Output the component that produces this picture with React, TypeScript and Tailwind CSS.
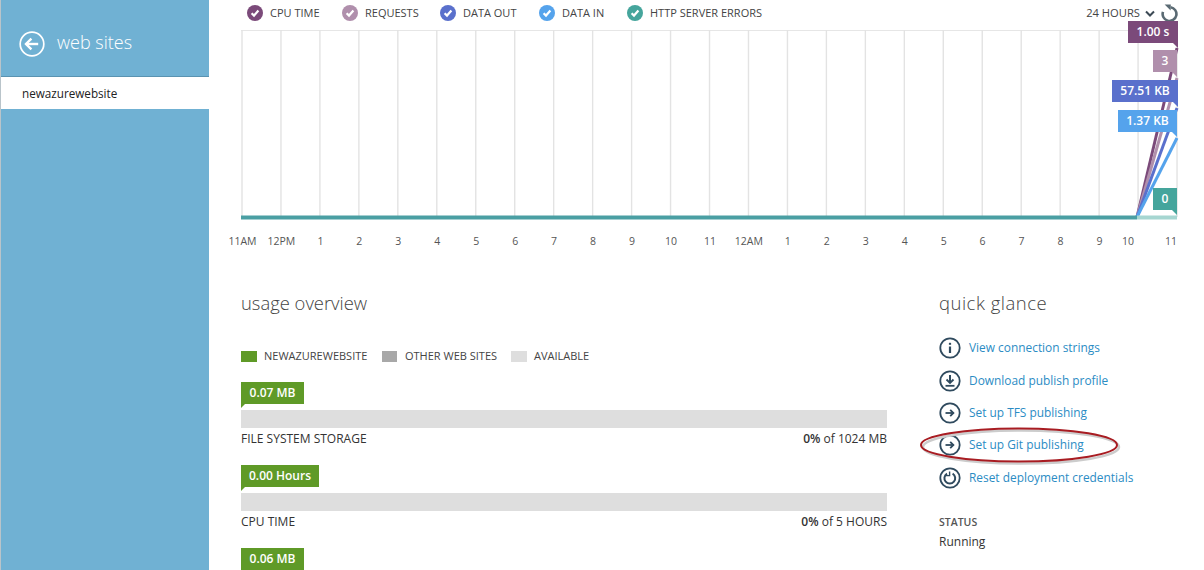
import React from 'react';

const font = { fontFamily: '"Open Sans", "Liberation Sans", sans-serif' };

const legend = [
  { label: 'CPU TIME', color: 'text-[#7b4a7a]', w: 'w-[95px]' },
  { label: 'REQUESTS', color: 'text-[#b08fac]', w: 'w-[98px]' },
  { label: 'DATA OUT', color: 'text-[#5a70cc]', w: 'w-[99px]' },
  { label: 'DATA IN', color: 'text-[#55a3ec]', w: 'w-[88px]' },
  { label: 'HTTP SERVER ERRORS', color: 'text-[#45a59c]', w: 'w-[150px]' },
];

const hours = ['11AM', '12PM', '1', '2', '3', '4', '5', '6', '7', '8', '9', '10', '11', '12AM', '1', '2', '3', '4', '5', '6', '7', '8', '9'];

const gridX = Array.from({ length: 25 }, (_, i) => 1 + i * 38.96);

const CheckDot = ({ className }: { className: string }) => (
  <svg viewBox="0 0 16 16" className={`w-4 h-4 shrink-0 ${className}`}>
    <circle cx="8" cy="8" r="8" fill="currentColor" />
    <path d="M4.6 8.2 7 10.6 11.4 5.6" fill="none" stroke="white" strokeWidth="2.2" />
  </svg>
);

const Tip = ({ text, className, tail }: { text: string; className: string; tail: string }) => (
  <div className={`absolute h-[22px] flex items-center justify-center text-[12px] font-semibold text-white ${className}`}>
    {text}
    <div className={`absolute right-0 top-full w-0 h-0 border-t-[5px] border-l-[5px] border-l-transparent ${tail}`} />
  </div>
);

const LinkIcon = ({ kind }: { kind: string }) => (
  <svg viewBox="0 0 22 22" className="w-[22px] h-[22px] shrink-0 text-[#2f4a5e]" fill="none" stroke="currentColor">
    <circle cx="11" cy="11" r="9.7" strokeWidth="1.8" />
    {kind === 'info' && (
      <>
        <path d="M11 9.5v6.5" strokeWidth="2.2" />
        <path d="M11 5.8v2" strokeWidth="2.2" />
      </>
    )}
    {kind === 'download' && (
      <>
        <path d="M11 5v7" strokeWidth="2" />
        <path d="M7.5 9.5 11 13l3.5-3.5" strokeWidth="1.8" />
        <path d="M6.5 15.8h9" strokeWidth="1.8" />
      </>
    )}
    {kind === 'arrow' && (
      <>
        <path d="M6.5 11h8" strokeWidth="1.8" />
        <path d="M11.2 7.8l3.2 3.2-3.2 3.2" strokeWidth="1.8" />
      </>
    )}
    {kind === 'reset' && (
      <>
        <path d="M13.6 6.6a5.4 5.4 0 1 1-5.6 0" strokeWidth="2" />
        <path d="M10.6 4.4v4.2H6.6" strokeWidth="1.4" />
      </>
    )}
  </svg>
);

const links = [
  { icon: 'info', label: 'View connection strings', h: 'h-[33px]' },
  { icon: 'download', label: 'Download publish profile', h: 'h-[33px]' },
  { icon: 'arrow', label: 'Set up TFS publishing', h: 'h-[32px]' },
  { icon: 'arrow', label: 'Set up Git publishing', h: 'h-[32px]' },
  { icon: 'reset', label: 'Reset deployment credentials', h: 'h-[33px]' },
];

const usage = [
  { tag: '0.07 MB', w: 'w-[63px]', name: 'FILE SYSTEM STORAGE', max: '1024 MB' },
  { tag: '0.00 Hours', w: 'w-[78px]', name: 'CPU TIME', max: '5 HOURS' },
];

const Tag = ({ text, w }: { text: string; w: string }) => (
  <div className={`relative h-[22px] ${w} bg-[#5f9a27] text-white text-[12px] font-semibold flex items-center justify-center`}>
    {text}
    <div className="absolute left-0 top-full w-0 h-0 border-t-[4px] border-t-[#5f9a27] border-r-[4px] border-r-transparent" />
  </div>
);

export default function App() {
  return (
    <div style={font} className="flex h-[570px] w-[1204px] overflow-hidden bg-white text-[#333]">
      <aside className="w-[209px] shrink-0 bg-[#70b1d3] border-l border-[#b9c4ca]">
        <div className="h-[76px] flex items-start pl-[18px] pt-[31px] gap-[12px] text-white">
          <svg viewBox="0 0 26 26" className="w-[26px] h-[26px] shrink-0" fill="none" stroke="white">
            <circle cx="13" cy="13" r="11.8" strokeWidth="1.7" />
            <path d="M6.8 13h12.4" strokeWidth="2.4" />
            <path d="M12.4 7.6 7 13l5.4 5.4" strokeWidth="2.4" />
          </svg>
          <span className="text-[18px] font-light leading-[24px] -mt-px">web sites</span>
        </div>
        <div className="h-[33px] bg-white border-t border-[#5a93b1] pl-[21px] pt-px flex items-center text-[11.7px] text-[#222]">
          newazurewebsite
        </div>
      </aside>

      <main className="relative flex-1 pl-[32px]">
        <div className="h-[30px] w-[936px] flex items-start pt-[5px] pl-[6px] text-[11px] text-[#444]">
          {legend.map((l) => (
            <div key={l.label} className={`flex items-center gap-[7px] h-4 ${l.w}`}>
              <CheckDot className={l.color} />
              <span>{l.label}</span>
            </div>
          ))}
          <div className="ml-auto flex items-center text-[11.2px] -mr-[1px]">
            <span>24 HOURS</span>
            <svg viewBox="0 0 10 8" className="w-[10px] h-[8px] ml-[5px] mr-[6px]" fill="none" stroke="#3c4a55" strokeWidth="2">
              <path d="M1 1.5 5 5.5 9 1.5" />
            </svg>
            <svg viewBox="0 0 17 18" className="w-[17px] h-[18px] -mt-px" fill="none" stroke="#5a6a73" strokeWidth="2.6">
              <path d="M9.6 3.2a6.9 6.9 0 1 1-7.6 4.6" />
              <path d="M3.6 0.4 9.8 0.6 9.6 6.6Z" fill="#5a6a73" stroke="none" />
            </svg>
          </div>
        </div>

        <div className="relative w-[936px] h-[190px]">
          <svg viewBox="0 0 940 190" className="w-[940px] h-[190px] overflow-visible">
            <path d="M0 0.5H936" stroke="#e6e6e6" strokeWidth="1" />
            {gridX.map((x) => (
              <path key={x} d={`M${x} 0V187`} stroke="#e3e3e3" strokeWidth="1.4" />
            ))}
            <path d="M896 187L936 18" stroke="#7b4a7a" strokeWidth="3" />
            <path d="M896 187L936 48" stroke="#b08fac" strokeWidth="3" />
            <path d="M896 187L936 78" stroke="#5a70cc" strokeWidth="3" />
            <path d="M896 187L936 108" stroke="#55a3ec" strokeWidth="3" />
            <path d="M896 187.5L936 187.5" stroke="#a6d6d1" strokeWidth="4" />
            <path d="M0 187.5H896" stroke="#4a9fa3" strokeWidth="4" />
          </svg>
          <Tip text="1.00 s" tail="border-t-[#7b4a7a]" className="left-[887px] -top-[9px] w-[50px] bg-[#7b4a7a]" />
          <Tip text="3" tail="border-t-[#b08fac]" className="left-[912px] top-[20px] w-[24px] bg-[#b08fac]" />
          <Tip text="57.51 KB" tail="border-t-[#5a70cc]" className="left-[871px] top-[50px] w-[66px] bg-[#5a70cc]" />
          <Tip text="1.37 KB" tail="border-t-[#55a3ec]" className="left-[877px] top-[80px] w-[59px] bg-[#55a3ec]" />
          <Tip text="0" tail="border-t-[#45a59c]" className="left-[912px] top-[158px] w-[24px] bg-[#45a59c]" />
        </div>

        <div className="flex h-[24px] items-center -ml-[18px] mt-[10px] text-[10.5px] text-[#555]">
          {hours.map((h, i) => (
            <span key={i} className="w-[38.96px] text-center shrink-0">{h}</span>
          ))}
          <span className="w-[18px] text-center shrink-0">10</span>
          <span className="w-[68px] text-center shrink-0">11</span>
        </div>

        <div className="flex mt-[34px]">
          <section className="w-[646px] shrink-0">
            <h2 className="text-[18.4px] font-light leading-[30px] text-[#444]">usage overview</h2>
            <div className="flex items-center h-[16px] mt-[30px] text-[11px] text-[#444]">
              <span className="w-4 h-[11px] bg-[#5f9a27] mr-[7px]" />
              <span className="w-[118px]">NEWAZUREWEBSITE</span>
              <span className="w-[15px] h-[11px] bg-[#a8a8a8] mr-[8px]" />
              <span className="w-[106px]">OTHER WEB SITES</span>
              <span className="w-4 h-[11px] bg-[#dedede] mr-[7px]" />
              <span>AVAILABLE</span>
            </div>
            <div className="flex flex-col gap-[16px] mt-[18px]">
              {usage.map((u) => (
                <div key={u.name}>
                  <Tag text={u.tag} w={u.w} />
                  <div className="h-[18px] bg-[#dedede] mt-[6px]" />
                  <div className="flex justify-between h-[21px] items-center text-[12px] text-[#333]">
                    <span>{u.name}</span>
                    <span>
                      <span className="font-semibold">0%</span> of {u.max}
                    </span>
                  </div>
                </div>
              ))}
              <Tag text="0.06 MB" w="w-[63px]" />
            </div>
          </section>

          <section className="ml-[52px] w-[230px]">
            <h2 className="text-[18.5px] font-light leading-[30px] tracking-[0.5px] text-[#444]">quick glance</h2>
            <div className="flex flex-col mt-[13px]">
              {links.map((l) => (
                <div key={l.label} className={`flex items-center gap-[8px] ${l.h} text-[11.9px] text-[#2b8cc4]`}>
                  <LinkIcon kind={l.icon} />
                  <span>{l.label}</span>
                </div>
              ))}
            </div>
            <div className="mt-[19px] text-[10.5px] font-semibold text-[#555] leading-[18px]">STATUS</div>
            <div className="text-[12px] text-[#333] leading-[20px] mt-px">Running</div>
          </section>
        </div>

        <svg viewBox="0 0 204 40" className="absolute left-[709px] top-[426px] w-[204px] h-[40px]" fill="none">
          <ellipse cx="103" cy="21" rx="98" ry="16.5" stroke="#cccccc" strokeWidth="2.5" />
          <ellipse cx="101" cy="19" rx="98" ry="16.5" stroke="#a81c22" strokeWidth="2" />
        </svg>
      </main>
    </div>
  );
}
